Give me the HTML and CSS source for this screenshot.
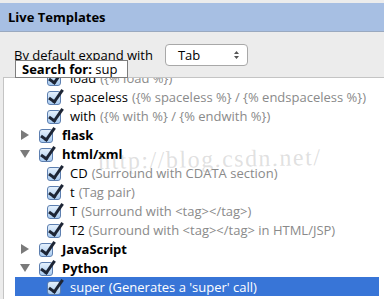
FILE: index.html
```html
<!DOCTYPE html>
<html lang="en">
<head>
  <meta charset="UTF-8" />
  <title>Live Templates</title>
  <link rel="stylesheet" href="styles.css">
</head>
<body>
  <div class="header">Live Templates</div>

  <div class="options">
    <span class="label">By default expand with</span>
    <div class="select">
      <span>Tab</span>
      <svg class="arrows" width="7" height="10" viewBox="0 0 7 10">
        <path d="M3.5 1 L6 4 L1 4 Z M3.5 9 L6 6 L1 6 Z" fill="#555"/>
      </svg>
    </div>
  </div>

  <div class="tree">
    <div class="rows">
      <div class="row child"><span class="check"></span><span class="name">load</span><span class="desc">({% load %})</span></div>
      <div class="row child"><span class="check"></span><span class="name">spaceless</span><span class="desc">({% spaceless %} / {% endspaceless %})</span></div>
      <div class="row child"><span class="check"></span><span class="name">with</span><span class="desc">({% with %} / {% endwith %})</span></div>
      <div class="row group"><span class="toggle closed"></span><span class="check"></span><span class="name">flask</span></div>
      <div class="row group"><span class="toggle open"></span><span class="check"></span><span class="name">html/xml</span></div>
      <div class="row child"><span class="check"></span><span class="name">CD</span><span class="desc">(Surround with CDATA section)</span></div>
      <div class="row child"><span class="check"></span><span class="name">t</span><span class="desc">(Tag pair)</span></div>
      <div class="row child"><span class="check"></span><span class="name">T</span><span class="desc">(Surround with &lt;tag&gt;&lt;/tag&gt;)</span></div>
      <div class="row child"><span class="check"></span><span class="name">T2</span><span class="desc">(Surround with &lt;tag&gt;&lt;/tag&gt; in HTML/JSP)</span></div>
      <div class="row group"><span class="toggle closed"></span><span class="check"></span><span class="name">JavaScript</span></div>
      <div class="row group"><span class="toggle open"></span><span class="check"></span><span class="name">Python</span></div>
      <div class="row child selected"><span class="check"></span><span class="name">super</span><span class="desc">(Generates a 'super' call)</span></div>
    </div>
    <div class="watermark">http://blog.csdn.net/</div>
  </div>

  <div class="search"><b>Search for:</b> sup</div>
</body>
</html>
```

FILE: styles.css
```css
body {
  margin: 0;
  background: #ececec;
  font-family: 'Open Sans', sans-serif;
  font-size: 13px;
  color: #000;
  height: 299px;
  overflow: hidden;
  position: relative;
}

.header {
  margin-top: 3px;
  height: 28px;
  line-height: 28px;
  padding-left: 8px;
  background: #a7bfe3;
  border-bottom: 1px solid #9aa9bf;
  font-weight: bold;
}

.options {
  height: 45px;
  display: flex;
  align-items: center;
  padding-left: 14px;
  gap: 12px;
}

.select {
  width: 62px;
  height: 20px;
  background: #fff;
  border: 1px solid #a8a8a8;
  border-radius: 4px;
  display: flex;
  align-items: center;
  justify-content: space-between;
  padding: 0 7px 0 12px;
}

.tree {
  margin-left: 3px;
  height: 222px;
  background: #fff;
  border-left: 1px solid #c4c4c4;
  border-top: 1px solid #c4c4c4;
  overflow: hidden;
  position: relative;
}

.rows {
  margin-top: -10px;
}

.row {
  height: 19px;
  display: flex;
  align-items: center;
  white-space: nowrap;
}

.row.child {
  padding-left: 43px;
}

.row.group {
  padding-left: 16px;
}

.row.group .name {
  font-weight: bold;
}

.row.selected {
  margin-left: 11px;
  padding-left: 32px;
  margin-right: 5px;
  background: #3875d7;
  color: #fff;
}

.row.selected .desc {
  color: #fff;
}

.toggle {
  width: 0;
  height: 0;
  margin-right: 9px;
}

.toggle.closed {
  border-top: 5px solid transparent;
  border-bottom: 5px solid transparent;
  border-left: 8px solid #7a7a7a;
  margin-left: 1px;
  margin-right: 10px;
}

.toggle.open {
  border-left: 5px solid transparent;
  border-right: 5px solid transparent;
  border-top: 8px solid #7a7a7a;
}

.check {
  width: 12px;
  height: 12px;
  border: 1px solid #5d7fb0;
  border-radius: 3px;
  background: linear-gradient(#e4f0fc, #a9cbf0);
  position: relative;
  margin-right: 9px;
  margin-top: 2px;
  flex-shrink: 0;
}

.check::after {
  content: "";
  position: absolute;
  left: 4px;
  top: -5px;
  width: 5px;
  height: 13px;
  border-right: 3px solid #1d2535;
  border-bottom: 3px solid #1d2535;
  transform: rotate(35deg);
  transform-origin: center;
}

.desc {
  color: #8a8a8a;
  margin-left: 4px;
}

.watermark {
  position: absolute;
  left: 94px;
  top: 68px;
  font-family: 'Liberation Serif', serif;
  font-size: 24px;
  letter-spacing: 1.5px;
  color: rgba(150, 150, 150, 0.3);
  transform: rotate(-1deg);
}

.search {
  position: absolute;
  left: 15px;
  top: 60px;
  width: 105px;
  height: 16px;
  line-height: 16px;
  padding-left: 6px;
  background: #fff;
  border: 1px solid #7d7d7d;
  white-space: nowrap;
  overflow: hidden;
}
```
